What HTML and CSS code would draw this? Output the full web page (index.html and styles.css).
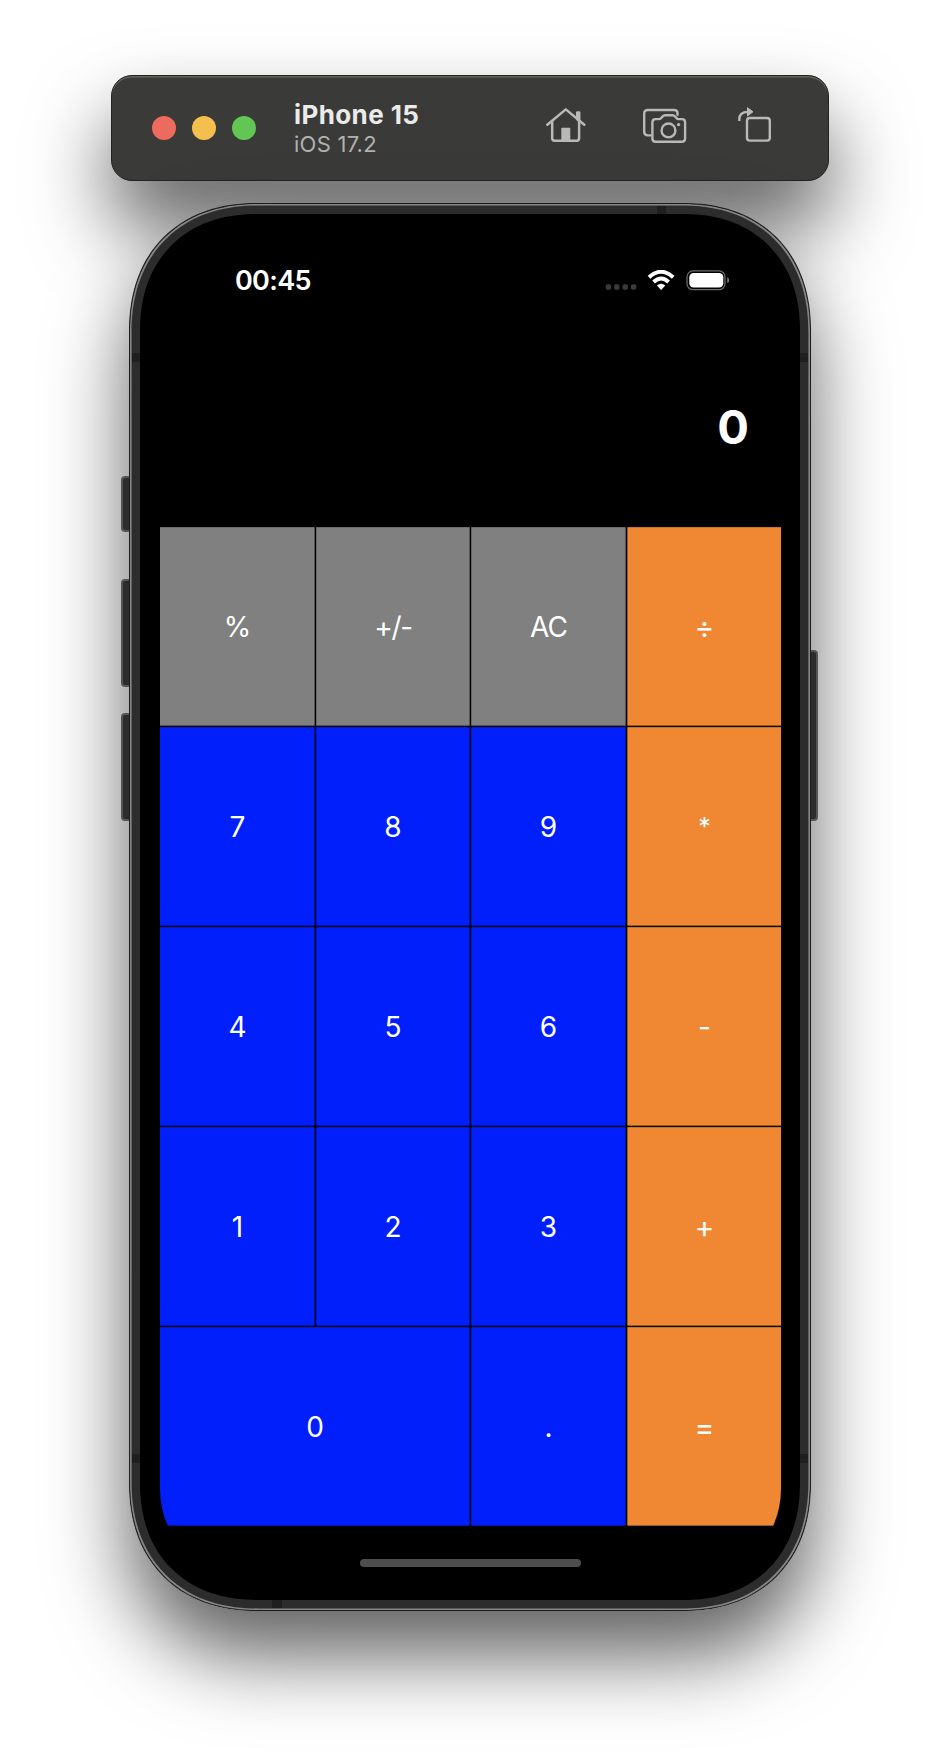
FILE: index.html
```html
<!DOCTYPE html>
<html lang="en">
<head>
<meta charset="utf-8">
<title>Calculator</title>
<link rel="stylesheet" href="styles.css">
</head>
<body>
<main class="stage">
  <header class="toolbar">
    <div class="lights"><i class="light red"></i><i class="light yellow"></i><i class="light green"></i></div>
    <div class="device"><div class="device-name">iPhone 15</div><div class="device-os">iOS 17.2</div></div>
    <div class="tools">
      <svg class="home" width="40" height="40" viewBox="0 0 40 40" fill="none" stroke="#b9b9b7" stroke-width="2.5" stroke-linecap="round" stroke-linejoin="round">
        <path d="M1.3 18.7 19.8 3.4 38.3 18.7"/><path d="M6.2 15v17.3q0 2.4 2.4 2.4h22.1q2.4 0 2.4-2.4V15"/><path d="M31.2 6.6h2v8.2l-2-1.6z" fill="#b9b9b7"/><path d="M16.2 22.6h7.2v12h-7.2z" fill="#b9b9b7" stroke-width="1.8"/>
      </svg>
      <svg class="camera" width="44" height="40" viewBox="0 0 44 40" fill="none" stroke="#b9b9b7" stroke-width="2.4" stroke-linecap="round" stroke-linejoin="round">
        <path d="M7.5 29.4H4.8q-3.6 0-3.6-3.6V7.6Q1.2 4 4.8 4h26.4q3.3 0 3.3 3.3v1.5"/>
        <path d="M12.6 13.1h3.3q1.4 0 2.3-1.1l1.4-1.6q1-1.2 2.5-1.2h7.4q1.5 0 2.5 1.2l1.4 1.6q.9 1.1 2.3 1.1h3.2q3.2 0 3.2 3.2v16.3q0 3.2-3.2 3.2H12.6q-3.2 0-3.2-3.2V16.3q0-3.2 3.2-3.2z"/><circle cx="25.5" cy="24.4" r="6.9"/><circle cx="35.6" cy="18.6" r="1.7" fill="#b9b9b7" stroke="none"/>
      </svg>
      <svg class="rotate" width="36" height="40" viewBox="0 0 36 40" fill="none" stroke="#b9b9b7" stroke-width="2.4" stroke-linejoin="round">
        <rect x="9" y="12" width="22.8" height="22.6" rx="2.8"/><path d="M1.3 15v-1.7q0-7.4 8.5-7.4"/><path d="M9.5 1.7v8.3L15 5.8z" fill="#b9b9b7" stroke-width="1"/>
      </svg>
    </div>
  </header>
  <section class="phone">
    <i class="button mute"></i><i class="button up"></i><i class="button down"></i><i class="button power"></i>
    <i class="band top"></i><i class="band lh"></i><i class="band rh"></i><i class="band ll"></i><i class="band rl"></i><i class="band bottom"></i>
    <div class="frame"><div class="bezel"><div class="screen">
      <div class="status">
        <time class="clock">00:45</time>
        <div class="signals">
          <svg width="124" height="22" viewBox="0 0 124 22">
            <g fill="#3a3a3a"><rect x=".7" y="14.2" width="5.4" height="5.6" rx="1.8"/><rect x="9.1" y="14.2" width="5.4" height="5.6" rx="1.8"/><rect x="17.5" y="14.2" width="5.4" height="5.6" rx="1.8"/><rect x="25.9" y="14.2" width="5.4" height="5.6" rx="1.8"/></g>
            <g fill="none" stroke="#fff" stroke-width="3.9"><path d="M44 7.3Q56 -3.9 68.2 7.3"/><path d="M48.6 12Q56.1 5 63.6 12"/></g>
            <path d="M56.1 19.9 51.9 15.5Q56.1 11.9 60.3 15.5z" fill="#fff"/>
            <rect x="82" y=".9" width="38" height="18.8" rx="6" fill="none" stroke="#6b6b6b" stroke-width="1.3"/><rect x="84.3" y="3" width="34" height="14.6" rx="4.3" fill="#fff"/><path d="M122.2 7.3q2 .8 2 2.9t-2 2.9z" fill="#777"/>
          </svg>
        </div>
      </div>
      <output class="display">0</output>
      <div class="keys">
        <div class="key util">%</div><div class="key util sign">+/-</div><div class="key util clear">AC</div><div class="key op wider">÷</div>
        <div class="key">7</div><div class="key">8</div><div class="key">9</div><div class="key op times">*</div>
        <div class="key">4</div><div class="key">5</div><div class="key">6</div><div class="key op">-</div>
        <div class="key">1</div><div class="key">2</div><div class="key">3</div><div class="key op wider">+</div>
        <div class="key wide">0</div><div class="key">.</div><div class="key op wider">=</div>
      </div>
      <div class="indicator"></div>
    </div></div></div>
  </section>
</main>
</body>
</html>
```
FILE: styles.css
```css
* { box-sizing: border-box; }
body { margin: 0; background: #fff; font-family: Inter, "Liberation Sans", sans-serif; }
.stage { height: 1762px; padding-top: 75px; display: flex; flex-direction: column; align-items: center; overflow: hidden; }
.toolbar { width: 718px; height: 106px; border-radius: 21px; border: 1px solid #222321; background: #3a3a38; box-shadow: inset 0 1.5px 0 #62625f, 0 45px 80px rgba(0,0,0,.62); display: flex; align-items: center; padding: 0 54px 0 40px; }
.lights { display: flex; gap: 16px; }
.light { width: 24px; height: 24px; border-radius: 50%; }
.red { background: #ed6a5f; }
.yellow { background: #f5bf4f; }
.green { background: #62c655; }
.device { margin-left: 38px; }
.device-name { font-size: 26px; line-height: 32px; font-weight: 700; color: #ebebea; letter-spacing: .4px; }
.device-os { font-size: 22px; line-height: 27px; color: #b0b0ae; letter-spacing: .25px; }
.tools { margin-left: auto; display: flex; align-items: center; padding-bottom: 4px; }
.camera { margin-left: 57px; }
.rotate { margin-left: 51px; }
.phone { position: relative; width: 682px; height: 1408px; margin-top: 22px; border-radius: 128px; corner-shape: superellipse(1.15); box-shadow: 0 45px 80px rgba(0,0,0,.62); }
.frame { position: relative; height: 100%; padding: 10px; border-radius: 128px; corner-shape: superellipse(1.15); border: 1px solid #1d1d1d; background: #2c2c2c; box-shadow: inset 0 0 0 1.6px #858585; }
.bezel { height: 100%; padding: 20px 19px 20px 20px; border-radius: 117px; corner-shape: superellipse(1.15); background: #000; }
.screen { height: 100%; display: flex; flex-direction: column; border-radius: 91px; overflow: hidden; }
.status { height: 92px; padding: 36px 52px 0 75px; display: flex; justify-content: space-between; align-items: flex-start; }
.clock { color: #fff; font-size: 27px; line-height: 22px; font-weight: 600; letter-spacing: -.7px; }
.signals { height: 22px; }
.display { height: 201px; padding-right: 32px; display: flex; align-items: center; justify-content: flex-end; color: #fff; font-size: 47px; font-weight: 700; }
.keys { height: 1000px; display: grid; grid-template-columns: 156px 155px 156px 154px; grid-template-rows: repeat(5, 200px); }
.key { display: flex; align-items: center; justify-content: center; padding-top: 1px; color: #fff; background: #001ffa; font-size: 28px; border-right: 1px solid #000; border-bottom: 1px solid #000; box-shadow: inset 1px 0 rgba(0,0,0,.2), inset 0 1px rgba(0,0,0,.15), inset -1px 0 rgba(0,0,0,.35), inset 0 -1px rgba(0,0,0,.35); }
.key:nth-child(4n+1) { box-shadow: inset 0 1px rgba(0,0,0,.15), inset -1px 0 rgba(0,0,0,.35), inset 0 -1px rgba(0,0,0,.35); }
.util { background: #808080; }
.op { background: #ef8733; border-right: 0; padding-left: 1px; box-shadow: inset 1px 0 rgba(0,0,0,.35), inset 0 1px rgba(0,0,0,.15), inset 0 -1px rgba(0,0,0,.35); }
.sign { letter-spacing: -1.4px; }
.clear { letter-spacing: -.9px; }
.times { font-size: 25px; padding-top: 0; }
.wider { font-size: 30px; }
.wide { grid-column: span 2; }
.indicator { width: 221px; height: 8px; margin: 32px auto 0; border-radius: 4px; background: #4d4d4d; }
.button { position: absolute; width: 10px; border: 2px solid #555; background: #2c2c2c; }
.mute, .up, .down { left: -8px; border-right: 0; border-radius: 4px 0 0 4px; }
.mute { top: 273px; height: 56px; }
.up { top: 376px; height: 108px; }
.down { top: 510px; height: 108px; }
.power { right: -7px; top: 447px; height: 171px; border-left: 0; border-radius: 0 4px 4px 0; }
.band { position: absolute; z-index: 1; width: 8px; height: 9px; background: #1f1f1f; }
.top { left: 528px; top: 3px; width: 9px; height: 8px; }
.bottom { left: 143px; bottom: 3px; width: 10px; height: 8px; }
.lh { left: 3px; top: 150px; }
.rh { right: 3px; top: 150px; }
.ll { left: 3px; top: 1251px; }
.rl { right: 3px; top: 1251px; }
```
